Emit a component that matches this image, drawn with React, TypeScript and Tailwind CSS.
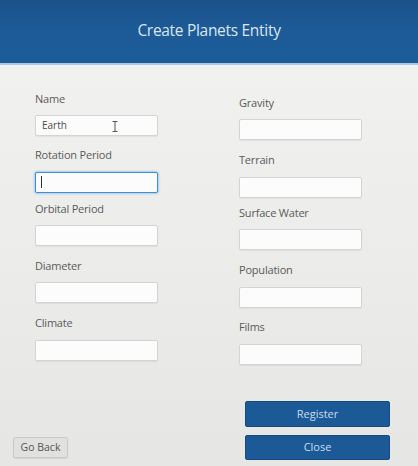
import React from "react";

const font = { fontFamily: '"Open Sans", "Noto Sans", Arial, sans-serif' };

function Label({ text, className }: { text: string; className: string }) {
  return (
    <div className={`h-[14px] leading-[14px] text-[11px] text-[#5a5a5a] tracking-[-0.2px] ${className}`}>{text}</div>
  );
}

function Field({ className, children, focused }: { className: string; children?: React.ReactNode; focused?: boolean }) {
  return (
    <div
      className={`relative h-[21px] w-[123px] rounded-[2px] bg-[#fbfcfb] ${
        focused
          ? "border-[1.5px] border-[#3f8fd2] shadow-[0_0_2px_1px_rgba(90,160,220,0.45)]"
          : "border border-[#d3d5d3] shadow-[0_1px_1px_rgba(0,0,0,0.06)]"
      } ${className}`}
    >
      {children}
    </div>
  );
}

export default function App() {
  return (
    <div className="flex h-[466px] w-[418px] flex-col overflow-hidden bg-[#f0f1ef]" style={font}>
      <div className="flex h-[65px] items-center justify-center bg-gradient-to-b from-[#1b5189] via-[#1c5b98] to-[#1c5c99] border-b-2 border-[#a9c6e4]">
        <span className="text-[15.5px] text-[#dbe6f2] tracking-[-0.3px] mt-[-2px]">Create Planets Entity</span>
      </div>
      <div className="flex flex-1 flex-col bg-gradient-to-b from-[#f1f2f0] to-[#e6e7e4]">
        <div className="flex pl-[35px]">
          <div className="flex w-[123px] flex-col">
            <Label text="Name" className="mt-[27px]" />
            <Field className="mt-[9px]">
              <span className="absolute left-[6px] top-[2px] text-[10px] text-[#4a4a4a]">Earth</span>
              <svg className="absolute left-[76px] top-[5px]" width="6" height="11" viewBox="0 0 6 11">
                <path d="M0.5 0.5h5M3 0.5v10M0.5 10.5h5" stroke="#555" strokeWidth="1" fill="none" />
              </svg>
            </Field>
            <Label text="Rotation Period" className="mt-[12px]" />
            <Field className="mt-[10px]" focused>
              <span className="absolute left-[5px] top-[3px] h-[12px] w-[1px] bg-[#333]" />
            </Field>
            <Label text="Orbital Period" className="mt-[9px]" />
            <Field className="mt-[9px]" />
            <Label text="Diameter" className="mt-[13px]" />
            <Field className="mt-[9px]" />
            <Label text="Climate" className="mt-[13px]" />
            <Field className="mt-[10px]" />
          </div>
          <div className="ml-[81px] flex w-[123px] flex-col">
            <Label text="Gravity" className="mt-[31px]" />
            <Field className="mt-[9px]" />
            <Label text="Terrain" className="mt-[13px]" />
            <Field className="mt-[10px]" />
            <Label text="Surface Water" className="mt-[8px]" />
            <Field className="mt-[9px]" />
            <Label text="Population" className="mt-[13px]" />
            <Field className="mt-[10px]" />
            <Label text="Films" className="mt-[12px]" />
            <Field className="mt-[10px]" />
          </div>
        </div>
        <div className="mt-auto flex items-end justify-between pb-[6px] pl-[13px] pr-[28px]">
          <button className="mb-[2px] h-[21px] w-[55px] rounded-[2px] border border-[#c9cac8] bg-[#e1e2e0] text-[10.5px] text-[#555] shadow-[0_1px_1px_rgba(0,0,0,0.08)]">
            Go Back
          </button>
          <div className="flex flex-col gap-[8px]">
            <button className="h-[26px] w-[145px] rounded-[2px] border border-[#174b80] bg-[#1c5a97] text-[11px] text-[#c9dcef]">
              Register
            </button>
            <button className="h-[25px] w-[145px] rounded-[2px] border border-[#174b80] bg-[#1c5a97] text-[11px] text-[#c9dcef]">
              Close
            </button>
          </div>
        </div>
      </div>
    </div>
  );
}
